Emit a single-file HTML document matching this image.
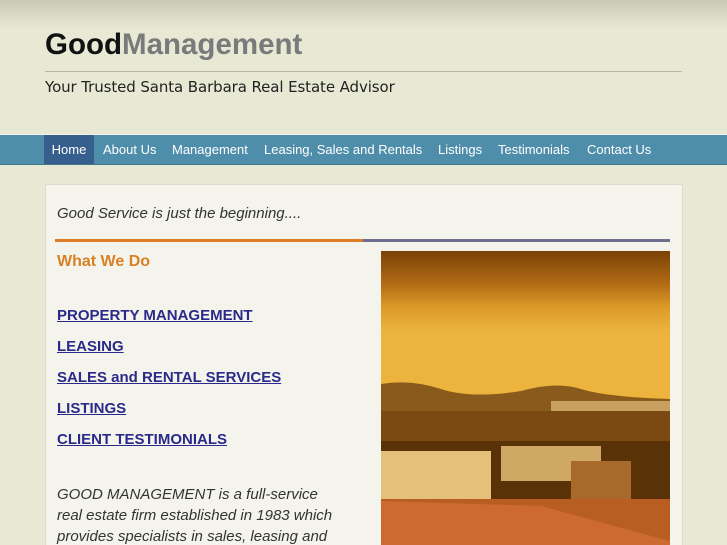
<!DOCTYPE html><html style="height:545px;overflow:hidden"><head><style>
body{margin:0;width:727px;height:545px;overflow:hidden;background:#e8e9d5;font-family:"Liberation Sans",sans-serif;position:relative}
.top{position:absolute;left:0;top:0;width:727px;height:30px;background:linear-gradient(#c9c9b8,#d9dac7 50%,#e8e9d5)}
.logo{position:absolute;left:45px;top:28px;font-size:29.5px;font-weight:bold;letter-spacing:0px}
.hr{position:absolute;left:45px;top:71px;width:637px;height:1px;background:#b5b5aa}
.tag{position:absolute;left:45px;top:78px;font-family:"DejaVu Sans",sans-serif;font-size:15px;color:#222;letter-spacing:-0.1px}
.nav{position:absolute;left:0;top:134px;width:727px;height:29px;background:#4f8eaa;border-top:1px solid #f4f4ea;border-bottom:1px solid #3f7890}
.nav span{position:absolute;top:0;height:29px;line-height:30px;color:#fff;font-size:13px}
.panel{position:absolute;left:45px;top:184px;width:636px;height:361px;overflow:hidden;background:#f4f4ec;border:1px solid #dcdccc;border-bottom:none}
a{color:#2a2a8a;font-weight:bold;font-size:15px;position:absolute;left:11px;text-decoration:underline}
</style></head><body>
<div class="top"></div>
<div class="logo"><span style="color:#111">Good</span><span style="color:#7a7a7a">Management</span></div>
<div class="hr"></div>
<div class="tag">Your Trusted Santa Barbara Real Estate Advisor</div>
<div class="nav">
<span style="left:44px;width:50px;background:#375f8e;text-align:center">Home</span>
<span style="left:103px">About Us</span>
<span style="left:172px">Management</span>
<span style="left:264px">Leasing, Sales and Rentals</span>
<span style="left:438px">Listings</span>
<span style="left:498px">Testimonials</span>
<span style="left:587px">Contact Us</span>
</div>
<div class="panel">
<div style="position:absolute;left:11px;top:20px;font-style:italic;font-size:15px;color:#333">Good Service is just the beginning....</div>
<div style="position:absolute;left:9px;top:54px;width:308px;height:3px;background:#de7d25"></div>
<div style="position:absolute;left:317px;top:54px;width:307px;height:3px;background:#6e6e8e"></div>
<div style="position:absolute;left:11px;top:68px;font-size:16px;font-weight:bold;color:#d98026">What We Do</div>
<a style="top:122px">PROPERTY MANAGEMENT</a>
<a style="top:153px">LEASING</a>
<a style="top:184px">SALES and RENTAL SERVICES</a>
<a style="top:215px">LISTINGS</a>
<a style="top:246px">CLIENT TESTIMONIALS</a>
<div style="position:absolute;left:11px;top:299px;width:288px;font-style:italic;font-size:15px;line-height:21px;color:#333">GOOD MANAGEMENT is a full-service real estate firm established in 1983 which provides specialists in sales, leasing and</div>
<svg style="position:absolute;left:335px;top:66px" width="289" height="300" viewBox="0 0 289 300">
<defs><linearGradient id="s" x1="0" y1="0" x2="0" y2="1"><stop offset="0" stop-color="#7a4208"/><stop offset=".2" stop-color="#b06a14"/><stop offset=".35" stop-color="#dc9a28"/><stop offset=".5" stop-color="#ecb43c"/></linearGradient></defs>
<rect width="289" height="160" fill="url(#s)"/>
<path d="M0 133 Q30 128 60 138 T140 140 Q175 130 200 138 T289 148 L289 170 L0 170Z" fill="#8a5a1c"/>
<rect x="170" y="150" width="119" height="10" fill="#c8a060"/>
<rect y="160" width="289" height="140" fill="#5a3208"/>
<rect y="160" width="289" height="30" fill="#7a4a12"/>
<rect x="0" y="200" width="110" height="50" fill="#e4c07a"/>
<rect x="120" y="195" width="100" height="35" fill="#cfa866"/>
<rect x="190" y="210" width="60" height="40" fill="#a86a2a"/>
<rect x="0" y="248" width="289" height="52" fill="#b85e22"/>
<path d="M0 250 L160 255 L289 290 L289 300 L0 300Z" fill="#cc6a30"/>
</svg>
</div>
</body></html>
